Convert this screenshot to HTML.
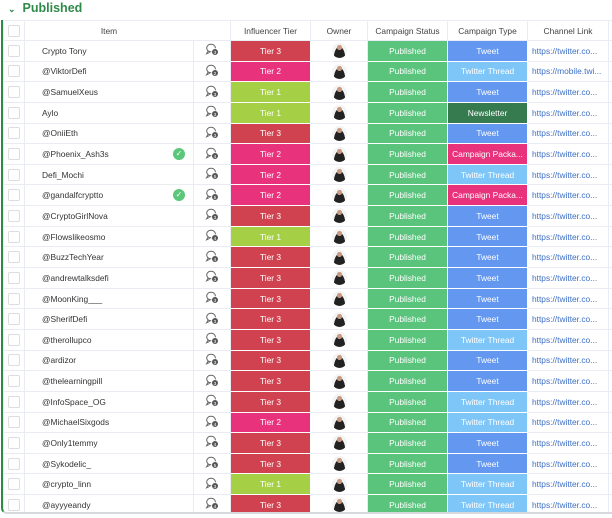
<!DOCTYPE html>
<html><head><meta charset="utf-8"><style>
body{margin:0;width:612px;height:518px;background:#fff;font-family:"Liberation Sans",sans-serif;overflow:hidden;position:relative}
.hd{position:absolute;left:8px;top:0;height:18px;color:#2f8a4a;font-size:12.5px;font-weight:bold;line-height:16px}
.hd span{font-size:9px;margin-right:7px;color:#2f8a4a}
.wrap{position:absolute;left:1px;top:20px;width:640px;height:492px;border-left:2px solid #2f8a4a;border-bottom:2px solid #d8d9de;border-radius:0 0 0 6px;overflow:hidden}
table{border-collapse:collapse;table-layout:fixed;font-size:8.4px;color:#333}
td,th{border:1px solid #e9ecf2;height:19.65px;padding:0;text-align:center;white-space:nowrap;overflow:hidden}
th{font-weight:normal;color:#444;height:19px}
.cb{width:10px;height:10px;border:1px solid #dcdce2;border-radius:2px;margin:auto}
.it{text-align:left;padding-left:17px;color:#333;position:relative}
.ok{position:absolute;right:8px;top:4px;width:12px;height:12px;border-radius:50%;background:#5bc77a;color:#fff;font-size:8px;line-height:12px;text-align:center}
.c{color:#fff;border-color:#fff}
.t3{background:#d0424f}.t2{background:#e8327c}.t1{background:#a5cf45}
.pb{background:#5ac47c}.tw{background:#6497f0}.th{background:#7ec6f8}.nl{background:#357b4f}.cp{background:#e8327c}
.lk{color:#3d6fc4;text-align:left;padding-left:4px}
.av{width:15px;height:15px;border-radius:50%;margin:auto;background:radial-gradient(circle at 50% 30%,#c99a82 0 2.4px,transparent 2.7px),radial-gradient(ellipse at 50% 100%,#222 0 5.5px,transparent 5.8px),#f4f4f4}
</style></head><body>
<div class="hd"><span>⌄</span>Published</div>
<div class="wrap"><table>
<colgroup><col style="width:21px"><col style="width:169px"><col style="width:37px"><col style="width:80px"><col style="width:57px"><col style="width:80px"><col style="width:80px"><col style="width:81px"><col style="width:30px"></colgroup>
<tr><th><div class="cb"></div></th><th colspan="2" style="padding-right:37px">Item</th><th>Influencer Tier</th><th>Owner</th><th>Campaign Status</th><th>Campaign Type</th><th>Channel Link</th><th></th></tr>
<tbody id="b">
<tr><td><div class="cb"></div></td><td class="it">Crypto Tony</td><td></td><td class="c t3">Tier 3</td><td><div class="av"></div></td><td class="c pb">Published</td><td class="c tw">Tweet</td><td class="lk">https://twitter.co...</td><td></td></tr>
</tbody></table></div>
<script>
var d=[["Crypto Tony",3,"tw",0,3],["@ViktorDefi",2,"th",0,2],["@SamuelXeus",1,"tw",0,3],["Aylo",1,"nl",0,3],["@OniiEth",3,"tw",0,3],["@Phoenix_Ash3s",2,"cp",1,4],["Defi_Mochi",2,"th",0,5],["@gandalfcryptto",2,"cp",1,5],["@CryptoGirlNova",3,"tw",0,3],["@Flowslikeosmo",1,"tw",0,4],["@BuzzTechYear",3,"tw",0,4],["@andrewtalksdefi",3,"tw",0,3],["@MoonKing___",3,"tw",0,3],["@SherifDefi",3,"tw",0,3],["@therollupco",3,"th",0,3],["@ardizor",3,"tw",0,3],["@thelearningpill",3,"tw",0,3],["@InfoSpace_OG",3,"th",0,3],["@MichaelSixgods",2,"th",0,4],["@Only1temmy",3,"tw",0,4],["@Sykodelic_",3,"tw",0,5],["@crypto_linn",1,"th",0,3],["@ayyyeandy",3,"th",0,4]];
var T={tw:"Tweet",th:"Twitter Thread",nl:"Newsletter",cp:"Campaign Packa..."};
var h="";d.forEach(function(r,i){h+='<tr><td><div class="cb"></div></td><td class="it">'+r[0]+(r[3]?'<span class="ok">✓</span>':'')+'</td><td><svg width="14" height="13" viewBox="0 0 14 13"><path d="M6 1.2a4.3 3.8 0 1 0 0.1 0zM3 8.3 1.6 10.8 4.6 9.4" fill="none" stroke="#666" stroke-width="1"/><circle cx="10" cy="9" r="3.4" fill="#555" stroke="#fff" stroke-width=".8"/><text x="10" y="10.8" font-size="4.8" fill="#fff" text-anchor="middle">'+r[4]+'</text></svg></td><td class="c t'+r[1]+'">Tier '+r[1]+'</td><td><div class="av"></div></td><td class="c pb">Published</td><td class="c '+r[2]+'">'+T[r[2]]+'</td><td class="lk">https://'+(i==1?'mobile.twi...':'twitter.co...')+'</td><td></td></tr>'});
document.getElementById("b").innerHTML=h;
</script>
</body></html>
